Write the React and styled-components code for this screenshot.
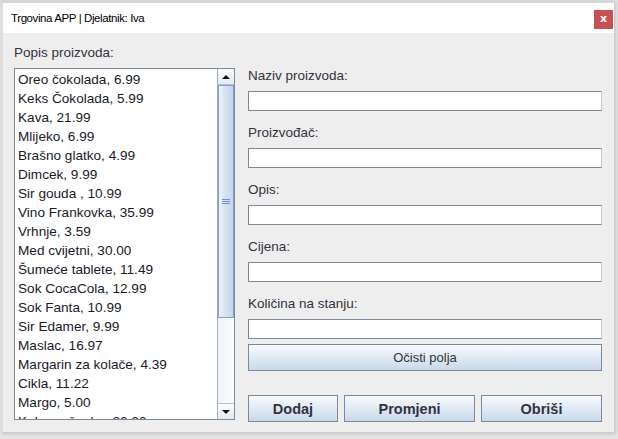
import React from "react";
import styled, { createGlobalStyle } from "styled-components";

const GlobalStyle = createGlobalStyle`
  html, body {
    margin: 0;
    padding: 0;
    background: #e4e4e4;
  }
  body {
    width: 618px;
    height: 439px;
    overflow: hidden;
    font-family: "Liberation Sans", Arial, sans-serif;
  }
`;

const proizvodi = [
  "Oreo čokolada, 6.99",
  "Keks Čokolada, 5.99",
  "Kava, 21.99",
  "Mlijeko, 6.99",
  "Brašno glatko, 4.99",
  "Dimcek, 9.99",
  "Sir gouda , 10.99",
  "Vino Frankovka, 35.99",
  "Vrhnje, 3.59",
  "Med cvijetni, 30.00",
  "Šumeće tablete, 11.49",
  "Sok CocaCola, 12.99",
  "Sok Fanta, 10.99",
  "Sir Edamer, 9.99",
  "Maslac, 16.97",
  "Margarin za kolače, 4.39",
  "Cikla, 11.22",
  "Margo, 5.00",
  "Kuhana šunka, 20.00",
];

const polja = ["Naziv proizvoda:", "Proizvođač:", "Opis:", "Cijena:", "Količina na stanju:"];

const App = () => {
  return (
    <>
      <GlobalStyle />
      <StWindow>
        <StTitleBar>
          <StTitle>Trgovina APP | Djelatnik: Iva</StTitle>
          <StClose>x</StClose>
        </StTitleBar>
        <StContent>
          <StLeft>
            <StLabel>Popis proizvoda:</StLabel>
            <StList>
              <StItems>
                {proizvodi.map((p) => (
                  <StItem key={p}>{p}</StItem>
                ))}
              </StItems>
              <StScrollbar>
                <StArrowBtn>
                  <StArrow $up />
                </StArrowBtn>
                <StTrack>
                  <StThumb>
                    <StGrip />
                  </StThumb>
                </StTrack>
                <StArrowBtn>
                  <StArrow />
                </StArrowBtn>
              </StScrollbar>
            </StList>
          </StLeft>
          <StForm>
            {polja.map((p) => (
              <StField key={p}>
                <StLabel>{p}</StLabel>
                <StInput type="text" />
              </StField>
            ))}
            <StButton type="button" $clear>
              Očisti polja
            </StButton>
            <StActions>
              <StButton type="button" $bold>
                Dodaj
              </StButton>
              <StButton type="button" $bold>
                Promjeni
              </StButton>
              <StButton type="button" $bold>
                Obriši
              </StButton>
            </StActions>
          </StForm>
        </StContent>
      </StWindow>
    </>
  );
};

// styled components
const StWindow = styled.div`
  width: 611px;
  height: 429px;
  border-top: 3px solid #d6d6d6;
  border-left: 3px solid #dedede;
  background: #eeeeee;
  box-shadow: 2px 2px 3px rgba(0, 0, 0, 0.12);
  display: flex;
  flex-direction: column;
`;

const StTitleBar = styled.div`
  height: 30px;
  background: #ffffff;
  display: flex;
  align-items: center;
  justify-content: space-between;
  padding: 0 1px 0 8px;
`;

const StTitle = styled.span`
  font-size: 11.5px;
  letter-spacing: -0.4px;
  color: #000;
  margin-top: -1px;
`;

const StClose = styled.div`
  width: 19px;
  height: 19px;
  background: #c75050;
  color: #fff;
  font-family: "DejaVu Sans", sans-serif;
  font-weight: 700;
  font-size: 11px;
  line-height: 17px;
  text-align: center;
  margin-top: 2px;
`;

const StContent = styled.div`
  flex: 1;
  display: grid;
  grid-template-columns: 221px 354px;
  column-gap: 13px;
  padding: 12px 12px 0 11px;
`;

const StLeft = styled.div`
  display: flex;
  flex-direction: column;
  gap: 7px;
`;

const StLabel = styled.div`
  font-size: 13.5px;
  line-height: 16px;
  height: 16px;
  color: #333340;
  white-space: nowrap;
`;

const StList = styled.div`
  height: 352px;
  box-sizing: border-box;
  border: 1px solid #7a8a99;
  background: #fff;
  display: flex;
`;

const StItems = styled.ul`
  flex: 1;
  margin: 0;
  padding: 1px 0 0 3px;
  list-style: none;
  overflow: hidden;
`;

const StItem = styled.li`
  height: 19px;
  line-height: 19px;
  font-size: 13.6px;
  color: #1a1a2a;
  white-space: nowrap;
`;

const StScrollbar = styled.div`
  width: 16px;
  border-left: 1px solid #a3acb8;
  display: flex;
  flex-direction: column;
  background: linear-gradient(to right, #f0f3f7, #fbfcfd);
`;

const StArrowBtn = styled.div`
  height: 16px;
  box-sizing: border-box;
  border-bottom: 1px solid #b8c0cc;
  background: linear-gradient(to bottom, #ffffff, #e3e9f0);
  display: flex;
  align-items: center;
  justify-content: center;

  &:last-child {
    border-bottom: none;
    border-top: 1px solid #b8c0cc;
  }
`;

const StArrow = styled.div`
  width: 0;
  height: 0;
  border-left: 4px solid transparent;
  border-right: 4px solid transparent;
  ${(p) =>
    p.$up ? "border-bottom: 4px solid #111;" : "border-top: 4px solid #111;"}
`;

const StTrack = styled.div`
  flex: 1;
`;

const StThumb = styled.div`
  height: 233px;
  box-sizing: border-box;
  border: 1px solid #7d9fd6;
  background: linear-gradient(to right, #eef3fa, #d6e2f2 45%, #c4d5ec);
  display: flex;
  align-items: center;
  justify-content: center;
`;

const StGrip = styled.div`
  width: 8px;
  height: 5px;
  border-top: 1px solid #6f8fc4;
  border-bottom: 1px solid #6f8fc4;
  box-sizing: border-box;
  position: relative;

  &::after {
    content: "";
    position: absolute;
    left: 0;
    right: 0;
    top: 1px;
    border-top: 1px solid #6f8fc4;
  }
`;

const StForm = styled.div`
  padding-top: 23px;
  display: flex;
  flex-direction: column;
`;

const StField = styled.div`
  display: flex;
  flex-direction: column;
  gap: 7px;
  margin-bottom: 14px;

  &:nth-of-type(5) {
    margin-bottom: 5px;
  }
`;

const StInput = styled.input`
  height: 20px;
  box-sizing: border-box;
  margin: 0;
  border: 1px solid #7a8a99;
  border-right-color: #c4ccd6;
  background: #fff;
  outline: none;
`;

const StButton = styled.button`
  height: 27px;
  box-sizing: border-box;
  margin: 0;
  padding: 0;
  border: 1px solid #7a8a9c;
  background: linear-gradient(to bottom, #f8fbfe, #e0eaf5 50%, #c9d9ea);
  color: #333340;
  font-family: "Liberation Sans", Arial, sans-serif;
  font-size: ${(p) => (p.$bold ? "14.5px" : "13px")};
  font-weight: ${(p) => (p.$bold ? 700 : 400)};
  ${(p) => (p.$clear ? "width: 100%; margin-bottom: 24px;" : "")}
`;

const StActions = styled.div`
  display: grid;
  grid-template-columns: 90px 131px 121px;
  column-gap: 6px;
`;

export default App;
